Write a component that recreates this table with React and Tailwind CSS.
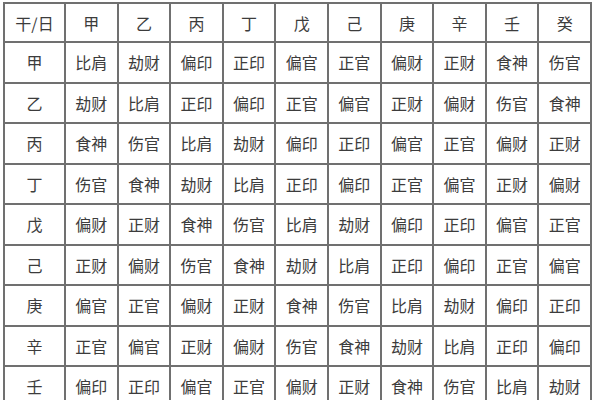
import React from "react";

const stems = ["甲", "乙", "丙", "丁", "戊", "己", "庚", "辛", "壬", "癸"];

const rows = [
  ["比肩", "劫财", "偏印", "正印", "偏官", "正官", "偏财", "正财", "食神", "伤官"],
  ["劫财", "比肩", "正印", "偏印", "正官", "偏官", "正财", "偏财", "伤官", "食神"],
  ["食神", "伤官", "比肩", "劫财", "偏印", "正印", "偏官", "正官", "偏财", "正财"],
  ["伤官", "食神", "劫财", "比肩", "正印", "偏印", "正官", "偏官", "正财", "偏财"],
  ["偏财", "正财", "食神", "伤官", "比肩", "劫财", "偏印", "正印", "偏官", "正官"],
  ["正财", "偏财", "伤官", "食神", "劫财", "比肩", "正印", "偏印", "正官", "偏官"],
  ["偏官", "正官", "偏财", "正财", "食神", "伤官", "比肩", "劫财", "偏印", "正印"],
  ["正官", "偏官", "正财", "偏财", "伤官", "食神", "劫财", "比肩", "正印", "偏印"],
  ["偏印", "正印", "偏官", "正官", "偏财", "正财", "食神", "伤官", "比肩", "劫财"],
  ["正印", "偏印", "正官", "偏官", "正财", "偏财", "伤官", "食神", "劫财", "比肩"],
];

const Cell = ({ children }) => (
  <div className="flex items-center justify-center bg-white text-[16px] text-[#3c3c3c]">
    {children}
  </div>
);

const App = () => {
  return (
    <div className="h-[400px] overflow-hidden bg-white pl-[3px] pt-[2px] font-['Noto_Sans_CJK_SC','Noto_Sans_CJK_JP',sans-serif]">
      <div className="grid w-[589px] grid-cols-[59px_repeat(10,1fr)] grid-rows-[37px] auto-rows-[38.5px] gap-[2px] bg-[#707070] p-[2px]">
        <Cell>干/日</Cell>
        {stems.map((s) => (
          <Cell key={s}>{s}</Cell>
        ))}
        {rows.map((row, i) => (
          <React.Fragment key={i}>
            <Cell>{stems[i]}</Cell>
            {row.map((god, j) => (
              <Cell key={j}>{god}</Cell>
            ))}
          </React.Fragment>
        ))}
      </div>
    </div>
  );
};

export default App;
